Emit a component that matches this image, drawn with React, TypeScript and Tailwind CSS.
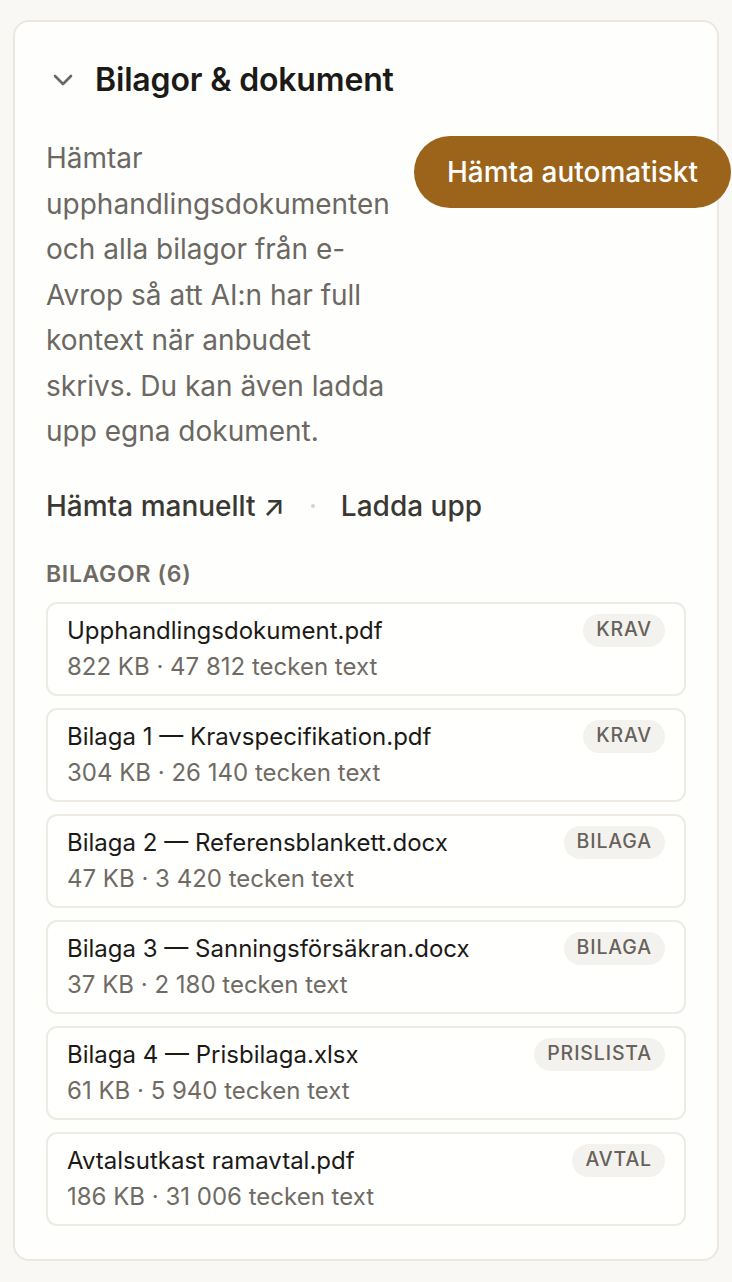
import React from "react";

const files = [
  { name: "Upphandlingsdokument.pdf", meta: "822 KB · 47 812 tecken text", tag: "KRAV" },
  { name: "Bilaga 1 — Kravspecifikation.pdf", meta: "304 KB · 26 140 tecken text", tag: "KRAV" },
  { name: "Bilaga 2 — Referensblankett.docx", meta: "47 KB · 3 420 tecken text", tag: "BILAGA" },
  { name: "Bilaga 3 — Sanningsförsäkran.docx", meta: "37 KB · 2 180 tecken text", tag: "BILAGA" },
  { name: "Bilaga 4 — Prisbilaga.xlsx", meta: "61 KB · 5 940 tecken text", tag: "PRISLISTA" },
  { name: "Avtalsutkast ramavtal.pdf", meta: "186 KB · 31 006 tecken text", tag: "AVTAL" },
];

export default function App() {
  return (
    <div
      className="min-h-[1282px] w-[732px] bg-[#f9f8f4] pt-[20px] pl-[13px]"
      style={{ fontFamily: "Inter, 'Noto Sans', sans-serif" }}
    >
      <div className="w-[706px] h-[1241px] rounded-[16px] border-2 border-[#ebe8e0] bg-[#fefefd] px-[31px] pt-[40px]">
        <div className="flex items-center gap-[20px] h-[36px]">
          <svg width="24" height="24" viewBox="0 0 24 24" className="ml-[5px] shrink-0">
            <path d="M4 8l8 8 8-8" fill="none" stroke="#6b6862" strokeWidth="2.6" strokeLinecap="round" strokeLinejoin="round" />
          </svg>
          <h2 className="text-[32px] font-semibold text-[#1c1a17] tracking-[-0.005em]">Bilagor &amp; dokument</h2>
        </div>

        <div className="flex gap-6 mt-[38px]">
          <p className="flex-1 text-[28px] leading-[45.5px] text-[#6b6862]">
            Hämtar upphandlingsdokumenten och alla bilagor från e-Avrop så att AI:n har full kontext när anbudet skrivs. Du kan även ladda upp egna dokument.
          </p>
          <button className="shrink-0 h-[72px] px-[33px] rounded-full bg-[#9c641b] text-white text-[28px] font-medium whitespace-nowrap">
            Hämta automatiskt
          </button>
        </div>

        <div className="flex items-center mt-[31px] text-[28px] font-medium text-[#3b3834] h-[40px]">
          <span>Hämta manuellt ↗</span>
          <span className="mx-[26px] w-[4px] h-[4px] rounded-full bg-[#d6d3cb]"></span>
          <span>Ladda upp</span>
        </div>

        <div className="mt-[33px] text-[23px] font-semibold tracking-[0.03em] text-[#6f6b64] leading-[30px]">
          BILAGOR (6)
        </div>

        <div className="mt-[13px] flex flex-col gap-[12px]">
          {files.map((f) => (
            <div
              key={f.name}
              className="flex items-start justify-between rounded-[11px] border-2 border-[#eeebe5] bg-[#fffffe] pl-[19px] pr-[19px] pt-[9px] pb-[9px]"
            >
              <div className="flex flex-col">
                <span className="text-[24px] leading-[36px] text-[#1c1a17]">{f.name}</span>
                <span className="text-[24px] leading-[36px] text-[#6f6b64]">{f.meta}</span>
              </div>
              <span className="mt-[1px] rounded-full bg-[#f4f2ee] px-[13px] h-[33px] flex items-center text-[19.5px] font-medium tracking-[0.045em] text-[#66625b]">
                {f.tag}
              </span>
            </div>
          ))}
        </div>
      </div>
    </div>
  );
}
